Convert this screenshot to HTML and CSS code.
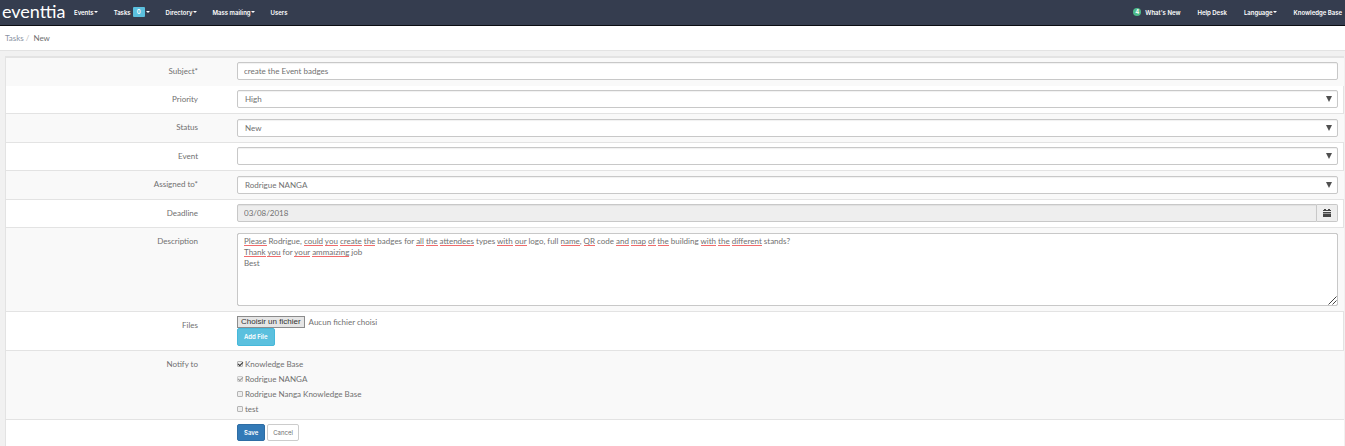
FILE: index.html
```html
<!DOCTYPE html>
<html lang="en">
<head>
  <meta charset="UTF-8">
  <title>Eventtia - New task</title>
  <meta name="viewport" content="width=device-width, initial-scale=1.0">
  <link rel="stylesheet" href="styles.css">
</head>
<body>
  <nav class="navbar">
    <a class="brand" href="#">eventtia</a>
    <div class="nav-links">
      <a href="#">Events<span class="caret"></span></a>
      <a href="#">Tasks<span class="badge">0</span><span class="caret"></span></a>
      <a href="#">Directory<span class="caret"></span></a>
      <a href="#">Mass mailing<span class="caret"></span></a>
      <a href="#">Users</a>
    </div>
    <div class="nav-links nav-right">
      <a href="#"><span class="news-count">4</span>What's New</a>
      <a href="#">Help Desk</a>
      <a href="#">Language<span class="caret"></span></a>
      <a href="#">Knowledge Base</a>
    </div>
  </nav>

  <div class="breadcrumb">
    <a href="#">Tasks</a><span class="slash">/</span><span>New</span>
  </div>

  <main class="content">
    <form class="task-form">
      <div class="row row-first">
        <label for="subject">Subject*</label>
        <input class="control" type="text" id="subject" value="create the Event badges">
      </div>
      <div class="row">
        <label for="priority">Priority</label>
        <div class="select-wrap">
          <select class="control" id="priority"><option>High</option></select>
        </div>
      </div>
      <div class="row">
        <label for="status">Status</label>
        <div class="select-wrap">
          <select class="control" id="status"><option>New</option></select>
        </div>
      </div>
      <div class="row">
        <label for="event">Event</label>
        <div class="select-wrap">
          <select class="control" id="event"><option></option></select>
        </div>
      </div>
      <div class="row">
        <label for="assigned">Assigned to*</label>
        <div class="select-wrap">
          <select class="control" id="assigned"><option>Rodrigue NANGA</option></select>
        </div>
      </div>
      <div class="row">
        <label for="deadline">Deadline</label>
        <div class="input-group">
          <input class="control" type="text" id="deadline" value="03/08/2018" readonly>
          <button class="addon" type="button" aria-label="Pick a date">
            <svg width="8" height="8" viewBox="0 0 8 8">
              <path fill="#444" d="M1 0h2v1h2V0h2v1h1v1H0V1h1zM0 3h8v1H0zM0 5h8v3H0z"/>
              <path fill="#999" d="M0 4h8v1H0z"/>
            </svg>
          </button>
        </div>
      </div>
      <div class="row">
        <label for="description">Description</label>
        <div class="editor">
          <!-- spelling marks, drawn under the textarea -->
          <div class="marks" aria-hidden="true"><u>Please</u> Rodrigue, <u>could</u> <u>you</u> <u>create</u> <u>the</u> badges for <u>all</u> <u>the</u> <u>attendees</u> types <u>with</u> <u>our</u> logo, full <u>name</u>, <u>QR</u> code <u>and</u> <u>map</u> <u>of</u> <u>the</u> building <u>with</u> <u>the</u> <u>different</u> stands?
<u>Thank</u> <u>you</u> for <u>your</u> <u>ammaizing</u> job</div>
          <textarea id="description" spellcheck="false">Please Rodrigue, could you create the badges for all the attendees types with our logo, full name, QR code and map of the building with the different stands?
Thank you for your ammaizing job
Best</textarea>
          <svg class="grip" width="9" height="9" viewBox="0 0 9 9">
            <path stroke="#444" d="M0.5 8.5l8-8M4.5 8.5l4-4"/>
          </svg>
        </div>
      </div>
      <div class="row">
        <label for="file">Files</label>
        <div class="files">
          <div class="file-line">
            <input class="file-input" type="file" id="file">
            <label class="file-btn" for="file">Choisir un fichier</label>
            <span>Aucun fichier choisi</span>
          </div>
          <button class="btn btn-info" type="button">Add File</button>
        </div>
      </div>
      <div class="row row-notify">
        <span class="row-label">Notify to</span>
        <div class="checks">
          <label><input type="checkbox" checked>Knowledge Base</label>
          <label><input type="checkbox" checked disabled>Rodrigue NANGA</label>
          <label><input type="checkbox">Rodrigue Nanga Knowledge Base</label>
          <label><input type="checkbox">test</label>
        </div>
      </div>
      <div class="row row-actions">
        <span></span>
        <div class="actions">
          <button class="btn btn-primary" type="submit">Save</button>
          <button class="btn btn-default" type="button">Cancel</button>
        </div>
      </div>
    </form>
  </main>
</body>
</html>
```
FILE: styles.css
```css
:root {
  --nav: #353d4f;
  --line: #e3e3e3;
  --border: #c8c8c8;
  --text: #707070;
}

* {
  box-sizing: border-box;
}

body {
  margin: 0;
  min-height: 100vh;
  display: flex;
  flex-direction: column;
  background: #f1f1f1;
  color: var(--text);
  font-family: Lato, sans-serif;
  font-size: 8px;
  line-height: 11px;
}

a {
  color: inherit;
  text-decoration: none;
}

input, select, textarea, button {
  font: inherit;
  color: inherit;
}

/* navbar */
.navbar {
  display: flex;
  align-items: center;
  height: 26px;
  padding: 0 3px 1px 2px;
  background: var(--nav);
  border-bottom: 1px solid #0b0d12;
  color: #fff;
}

.brand {
  width: 72px;
  padding-bottom: 3px;
  font-size: 18px;
  line-height: 20px;
}

.nav-links {
  display: flex;
  gap: 16px;
  font-family: Inter, sans-serif;
  font-size: 6px;
  font-weight: 600;
}

.nav-links a {
  display: flex;
  align-items: center;
  white-space: nowrap;
}

.nav-right {
  gap: 17px;
  margin-left: auto;
}

.caret {
  border: 2px solid transparent;
  border-top-color: #fff;
  border-bottom: 0;
}

.badge {
  margin: 0 1px 0 2px;
  padding: 0 4px;
  border-radius: 1px;
  background: #5bc0de;
  line-height: 10px;
}

.news-count {
  width: 8px;
  height: 8px;
  margin-right: 4px;
  border-radius: 50%;
  background: #4dbb8b;
  line-height: 8px;
  text-align: center;
}

.breadcrumb {
  height: 25px;
  padding: 7px 5px 6px;
  background: #fff;
  border-bottom: 1px solid var(--line);
}

.breadcrumb a {
  color: #8a93a3;
}

.slash {
  margin: 0 4px 0 2px;
  color: #bbb;
}

/* form */
.content {
  flex: 1;
  display: flex;
  padding: 5px 1px 0 5px;
}

.task-form {
  flex: 1;
  background: #fff;
  border-top: 2px solid var(--line);
  border-left: 1px solid var(--line);
}

.row {
  display: grid;
  grid-template-columns: 192px 1fr;
  column-gap: 39px;
  padding: 5px 6px 5px 0;
  background: #f9f9f9;
  border-bottom: 1px solid var(--line);
}

.row:nth-child(even) {
  padding: 4px 5px 5px 0;
  background: #fff;
  border-right: 1px solid var(--line);
}

.row > label,
.row-label {
  padding-top: 3px;
  text-align: right;
}

.row.row-first {
  padding: 4px 6px 6px 0;
  border-bottom: 0;
}

.row:nth-child(even) > label,
.row-first > label {
  padding-top: 4px;
}

.control {
  display: block;
  width: 100%;
  height: 18px;
  margin: 0;
  padding: 0 6px;
  background: #fff;
  border: 1px solid var(--border);
  border-radius: 2px;
  box-shadow: inset 0 1px 1px rgba(0, 0, 0, 0.06);
  appearance: none;
}

.select-wrap {
  position: relative;
}

.select-wrap .control {
  padding-left: 7px;
}

.select-wrap::after {
  content: "";
  position: absolute;
  top: 6px;
  right: 6px;
  border: 3px solid transparent;
  border-top: 6px solid #505050;
  border-bottom: 0;
  pointer-events: none;
}

.input-group {
  display: flex;
}

.input-group .control {
  background: #eee;
  border-radius: 2px 0 0 2px;
}

.addon {
  display: flex;
  align-items: center;
  justify-content: center;
  width: 21px;
  flex-shrink: 0;
  padding: 0;
  background: #eee;
  border: 1px solid var(--border);
  border-left: 0;
  border-radius: 0 2px 2px 0;
}

.editor {
  position: relative;
  display: flex;
  background: #fff;
}

.editor textarea,
.marks {
  width: 100%;
  height: 73px;
  margin: 0;
  padding: 2px 6px;
  border: 1px solid var(--border);
  border-radius: 2px;
  white-space: pre-wrap;
}

.editor textarea {
  position: relative;
  background: transparent;
  resize: none;
}

.marks {
  position: absolute;
  top: 0;
  left: 0;
  color: transparent;
}

.marks u {
  text-decoration: none;
  box-shadow: inset 0 -1px #f06c6c;
}

.grip {
  position: absolute;
  right: 1px;
  bottom: 1px;
  pointer-events: none;
}

/* files */
.row:has(.files) {
  padding-bottom: 4px;
}

.file-line {
  position: relative;
  display: flex;
  align-items: center;
  gap: 4px;
  height: 12px;
}

.file-input {
  position: absolute;
  width: 68px;
  height: 12px;
  opacity: 0;
}

.file-btn {
  padding: 0 3px;
  background: #e6e6e6;
  border: 1px solid #8c8c8c;
  color: #333;
  font-family: "Liberation Sans", sans-serif;
  line-height: 10px;
}

.btn {
  height: 17px;
  padding: 0 5px;
  border: 1px solid;
  border-radius: 2px;
  font-family: Inter, sans-serif;
  font-size: 6px;
  font-weight: 600;
  line-height: 10px;
}

.files .btn {
  display: block;
  height: 18px;
}

.btn-info,
.btn-primary {
  padding: 0 6px;
  color: #fff;
}

.btn-info {
  background: #5bc0de;
  border-color: #46b8da;
}

.btn-primary {
  background: #337ab7;
  border-color: #2e6da4;
}

.btn-default {
  background: #fff;
  border-color: #ccc;
  font-weight: 400;
}

/* notify list */
.row-notify {
  padding: 6px 6px 3px 0;
}

.row-notify .row-label {
  padding-top: 2px;
}

.checks {
  display: grid;
  gap: 1px;
  justify-items: start;
}

.checks label {
  display: flex;
  align-items: center;
  gap: 2px;
  height: 14px;
}

.checks input {
  width: 6px;
  height: 6px;
  margin: 0;
  background: #eee;
  border: 1px solid #b4b4b4;
  border-radius: 1px;
  appearance: none;
}

.checks input:checked::before {
  content: "";
  display: block;
  width: 4px;
  height: 2px;
  border: solid #333;
  border-width: 0 0 1px 1px;
  transform: rotate(-45deg);
}

.checks input:disabled {
  border-color: #ccc;
}

.checks input:disabled::before {
  border-color: #999;
}

.row.row-actions {
  border-bottom: 0;
  border-right: 0;
}

.actions {
  display: flex;
  gap: 2px;
}
```
